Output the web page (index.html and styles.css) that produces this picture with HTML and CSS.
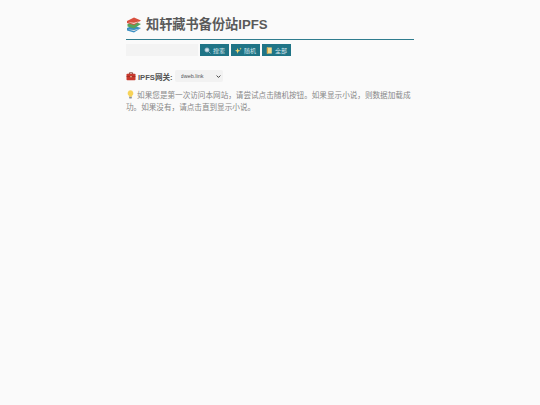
FILE: index.html
```html
<!DOCTYPE html>
<html lang="zh-CN">
<head>
    <meta charset="UTF-8">
    <meta name="viewport" content="width=device-width, initial-scale=1.0">
    <title>知轩藏书备份站IPFS</title>
    <link rel="stylesheet" href="styles.css">
</head>
<body>
    <div class="container">
        <h1 class="title">
            <svg class="title-icon" viewBox="0 0 16 16">
                <path d="M1 11 L7 8.5 L15 11 L8 15.5 L1 13.5 Z" fill="#3b8fc4"/>
                <path d="M2 12.4 L8 14 L14 11.4 L8 12.9 Z" fill="#e8e8e8"/>
                <path d="M1.5 7 L8 4.5 L15 7 L8 11.5 L1.5 9.5 Z" fill="#5aa35a"/>
                <path d="M1 4 L8 0.5 L15 3.5 L8 8 L1 6 Z" fill="#d9503f"/>
                <path d="M2 5.3 L8 6.9 L14 3.9 L8 5.7 Z" fill="#f0e6d8"/>
            </svg>
            <span>知轩藏书备份站IPFS</span>
        </h1>
        <div class="search-row">
            <input class="search-input" type="text">
            <button class="btn">
                <svg class="btn-icon" viewBox="0 0 8 8"><circle cx="3.4" cy="3.4" r="2.4" fill="#cfe3ee" stroke="#9fb8c4" stroke-width="0.8"/><path d="M5 5 L7.4 7.4" stroke="#9fb8c4" stroke-width="1"/></svg>
                搜索
            </button>
            <button class="btn">
                <svg class="btn-icon" viewBox="0 0 8 8"><path d="M3 1 L3.8 3.4 L6.2 4.2 L3.8 5 L3 7.6 L2.2 5 L0 4.2 L2.2 3.4 Z" fill="#f5d76e"/><path d="M6.4 .6 L6.8 1.6 L7.8 2 L6.8 2.4 L6.4 3.4 L6 2.4 L5 2 L6 1.6 Z" fill="#f5d76e"/></svg>
                随机
            </button>
            <button class="btn">
                <svg class="btn-icon" viewBox="0 0 8 8"><rect x="1" y="0.5" width="5.6" height="7" fill="#f2d98c"/><rect x="1" y="0.5" width="1.2" height="7" fill="#d9a441"/></svg>
                全部
            </button>
        </div>
        <div class="gateway-row">
            <svg class="gateway-icon" viewBox="0 0 10 10">
                <path d="M3.4 3 V1.8 H6.6 V3" fill="none" stroke="#7a3b30" stroke-width="0.9"/>
                <rect x="0.5" y="2.8" width="9" height="6.4" rx="0.8" fill="#c8382c"/>
                <rect x="0.5" y="5.4" width="9" height="0.6" fill="#8e2a20"/>
                <rect x="4.3" y="5" width="1.4" height="1.3" fill="#e8c9a0"/>
            </svg>
            <label class="gateway-label" for="gateway">IPFS网关:</label>
            <select class="gateway-select" id="gateway">
                <option>dweb.link</option>
            </select>
        </div>
        <p class="tip">
            <svg class="tip-icon" viewBox="0 0 10 10">
                <path d="M5 0.4 A3.3 3.3 0 0 1 6.8 6.4 V7.4 H3.2 V6.4 A3.3 3.3 0 0 1 5 0.4 Z" fill="#f7d358"/>
                <rect x="3.5" y="7.6" width="3" height="1.8" rx="0.5" fill="#8a8f99"/>
            </svg>
            如果您是第一次访问本网站，请尝试点击随机按钮。如果显示小说，则数据加载成功。如果没有，请点击直到显示小说。
        </p>
    </div>
</body>
</html>
```

FILE: styles.css
```css
body {
    font-family: "Liberation Sans", "Noto Sans CJK SC", sans-serif;
    background-color: #fafafa;
    margin: 0;
    color: #555;
}

.container {
    width: 288px;
    margin: 0 auto;
    padding-top: 16px;
}

.title {
    display: flex;
    align-items: center;
    gap: 4px;
    margin: 0 0 4px;
    padding-bottom: 5px;
    border-bottom: 1px solid #2f7c8e;
    font-size: 13.2px;
    line-height: 18px;
    font-weight: 700;
    color: #5a5a5a;
}

.title-icon {
    width: 16px;
    height: 16px;
}

.search-row {
    display: flex;
    align-items: center;
    gap: 2px;
}

.search-input {
    width: 72px;
    height: 12px;
    padding: 0;
    border: none;
    background-color: #f3f3f3;
}

.btn {
    display: flex;
    align-items: center;
    justify-content: center;
    gap: 2px;
    width: 29px;
    height: 12px;
    padding: 0;
    border: none;
    background-color: #1f7486;
    color: #d5e6eb;
    font-family: inherit;
    font-size: 6px;
}

.btn-icon {
    width: 7px;
    height: 7px;
}

.gateway-row {
    display: flex;
    align-items: center;
    margin-top: 14px;
}

.gateway-icon {
    width: 10px;
    height: 10px;
    margin-right: 2px;
}

.gateway-label {
    font-size: 7.6px;
    font-weight: 700;
    color: #555;
}

.gateway-select {
    appearance: none;
    width: 48px;
    height: 12px;
    margin-left: 2px;
    padding: 0 0 0 6px;
    border: none;
    border-radius: 2px;
    background-color: #f2f2f2;
    background-image: url("data:image/svg+xml,%3Csvg xmlns='http://www.w3.org/2000/svg' viewBox='0 0 8 8'%3E%3Cpath d='M1 2.5 L4 5.5 L7 2.5' fill='none' stroke='%23444' stroke-width='1.6'/%3E%3C/svg%3E");
    background-repeat: no-repeat;
    background-position: right 2px center;
    background-size: 5px 5px;
    color: #555;
    font-family: inherit;
    font-size: 5.5px;
}

.tip {
    margin: 8px 0 0;
    font-size: 7.6px;
    line-height: 12px;
    color: #888;
}

.tip-icon {
    width: 9px;
    height: 9px;
    vertical-align: -1px;
}
```
